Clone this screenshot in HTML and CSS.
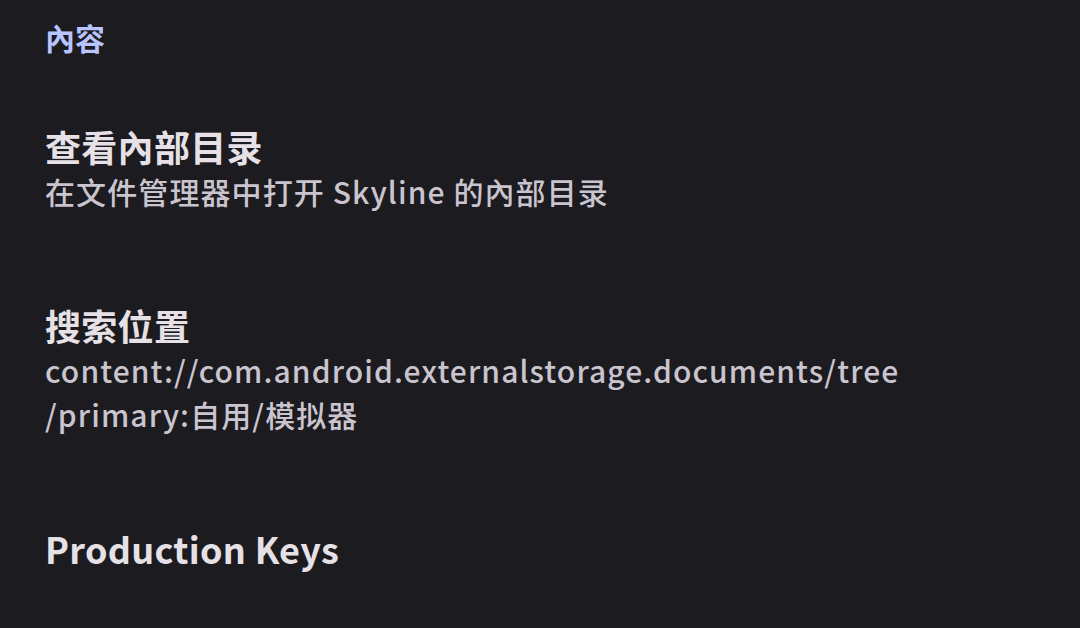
FILE: index.html
```html
<!DOCTYPE html>
<html lang="zh-CN">
<head>
<meta charset="utf-8">
<link rel="stylesheet" href="styles.css">
</head>
<body>
<main class="page">
  <h2 class="section-title">內容</h2>
  <div class="item">
    <div class="item-title">查看內部目录</div>
    <div class="item-sub">在文件管理器中打开 Skyline 的內部目录</div>
  </div>
  <div class="item">
    <div class="item-title">搜索位置</div>
    <div class="item-sub">content://com.android.externalstorage.documents/tree<br>/primary:自用/模拟器</div>
  </div>
  <div class="item">
    <div class="item-title">Production Keys</div>
  </div>
</main>
</body>
</html>
```

FILE: styles.css
```css
html, body {
  margin: 0;
  padding: 0;
  background: #1c1b20;
  height: 100%;
  overflow: hidden;
}
body {
  font-family: "Noto Sans CJK SC", "Noto Sans", sans-serif;
}
.page {
  padding: 17px 45px 0 45px;
  display: flex;
  flex-direction: column;
}
.section-title {
  margin: 0 0 24px 0;
  font-size: 30px;
  line-height: 40px;
  font-weight: 700;
  color: #b8c4ff;
}
.item {
  padding: 42px 0 47px 0;
  display: flex;
  flex-direction: column;
}
.item-title {
  font-size: 36px;
  line-height: 46px;
  font-weight: 700;
  letter-spacing: 0.3px;
  color: #e6e1e6;
}
.item-sub {
  font-size: 30px;
  line-height: 44px;
  font-weight: 500;
  letter-spacing: 1.1px;
  color: #cac4cf;
}
```
